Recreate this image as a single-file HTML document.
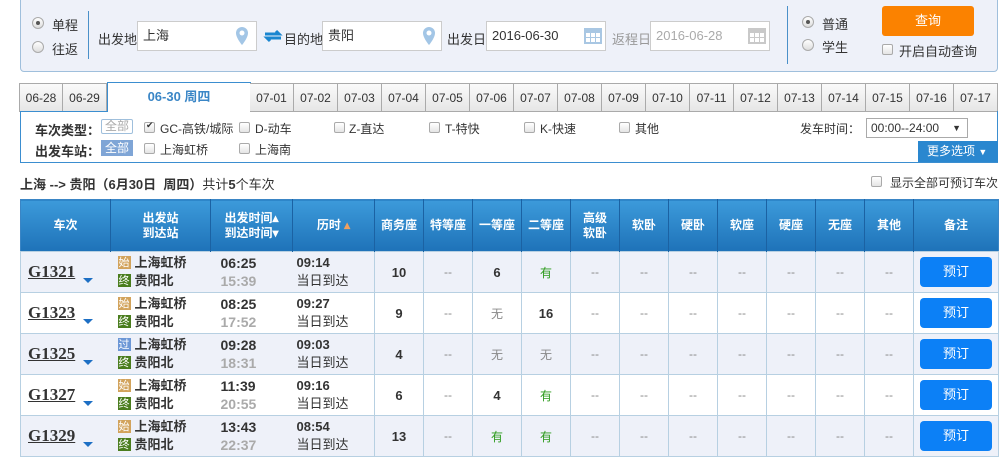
<!DOCTYPE html>
<html><head><meta charset="utf-8"><style>
*{box-sizing:border-box;margin:0;padding:0}
body{width:1004px;height:466px;background:#fff;font-family:"Liberation Sans","Noto Sans CJK SC",sans-serif;font-size:12px;color:#333;position:relative;overflow:hidden}
.a{position:absolute}
.top{left:20px;top:-2px;width:978px;height:74px;background:#eef1f9;border:1px solid #9fbfdc;border-radius:0 0 4px 4px}
.radio{width:12px;height:12px;border:1px solid #aaa;border-radius:50%;background:linear-gradient(#fff,#ddd)}
.radio.on::after{content:"";position:absolute;left:3px;top:3px;width:4px;height:4px;border-radius:50%;background:#555}
.inp{height:30px;background:#fff;border:1px solid #ccc;font-size:13px;line-height:28px;padding-left:5px}
.cb{width:11px;height:11px;border:1px solid #aaa;border-radius:2px;background:linear-gradient(#fff,#e4e4e4)}
.tab{top:83px;height:29px;width:44px;border:1px solid #aaa;border-left:none;background:linear-gradient(#fafafa,#e6e6e6);text-align:center;line-height:28px;font-size:12px;color:#333}
.filt{left:20px;top:111px;width:978px;height:52px;border:1px solid #3b8ed0;border-top:none}
table{position:absolute;left:20px;top:199px;width:978px;border-collapse:collapse;table-layout:fixed;border:1px solid #3a85c5}
th{background:linear-gradient(#3c9ada,#1e72b8);color:#fff;font-weight:bold;font-size:12px;height:52px;line-height:15px;border-right:1px solid #1b62a3;position:relative}
td{height:41px;border:1px solid #b7d0e2;text-align:center;font-size:12px;color:#888}
tr.g td{background:#eef1f9}
.tn{font-family:"Liberation Serif",serif;font-weight:bold;font-size:17px;color:#333;text-decoration:underline;text-align:left;padding-left:7px;border-right:none}
.tn span{display:inline-block;width:0;height:0;border-left:5px solid transparent;border-right:5px solid transparent;border-top:5px solid #1d6fc4;margin-left:8px;vertical-align:-6px}
.st{text-align:left;padding-left:7px;font-weight:bold;font-size:13px;color:#333;line-height:18px;border-left:none;border-right:none;white-space:nowrap}
.ic{display:inline-block;width:13px;height:13px;font-size:11px;line-height:13px;color:#fff;text-align:center;margin-right:4px;vertical-align:-2px;font-weight:normal;overflow:hidden;white-space:nowrap;font-family:"Noto Sans CJK SC",sans-serif}
.tm{text-align:left;padding-left:10px;font-weight:bold;font-size:14px;line-height:18px;color:#333;border-left:none;border-right:none}
.tm i{font-style:normal;color:#aaa}
.du{text-align:left;padding-left:4px;font-size:13px;line-height:18px;color:#333;border-left:none}
.du b{font-weight:bold}
.n{font-weight:bold;color:#333;font-size:13px}
.y{color:#2b9a1a}
.btn{display:inline-block;width:72px;height:30px;background:#0c80f6;border-radius:4px;color:#fff;line-height:30px;font-size:13px}
</style></head><body>
<div class="a top"></div>
<div class="a radio on" style="left:32px;top:17px"></div><div class="a" style="left:52px;top:15px;font-size:13px">单程</div>
<div class="a radio" style="left:32px;top:41px"></div><div class="a" style="left:52px;top:39px;font-size:13px">往返</div>
<div class="a" style="left:88px;top:11px;width:1px;height:48px;background:#4a90c9"></div>
<div class="a" style="left:98px;top:29px;font-size:13px">出发地</div>
<div class="a inp" style="left:137px;top:21px;width:120px">上海</div>
<svg class="a" style="left:235px;top:26px" width="14" height="20"><path d="M7 1a6 6 0 0 0-6 6c0 5 6 12 6 12s6-7 6-12a6 6 0 0 0-6-6z" fill="#a3c6e6"/><circle cx="7" cy="7" r="2.5" fill="#fff"/></svg>
<svg class="a" style="left:263px;top:28px" width="20" height="16"><path d="M2 6h14l-3-3M18 10H4l3 3" stroke="#1a86d0" stroke-width="3" fill="none"/></svg>
<div class="a" style="left:284px;top:29px;font-size:13px">目的地</div>
<div class="a inp" style="left:322px;top:21px;width:120px">贵阳</div>
<svg class="a" style="left:422px;top:26px" width="14" height="20"><path d="M7 1a6 6 0 0 0-6 6c0 5 6 12 6 12s6-7 6-12a6 6 0 0 0-6-6z" fill="#a3c6e6"/><circle cx="7" cy="7" r="2.5" fill="#fff"/></svg>
<div class="a" style="left:447px;top:29px;font-size:13px">出发日</div>
<div class="a inp" style="left:486px;top:21px;width:120px">2016-06-30</div>
<svg class="a" style="left:583px;top:25px" width="20" height="20"><rect x="1" y="3" width="18" height="16" fill="#a9c7e3"/><g fill="#fff"><rect x="3" y="8" width="4" height="4"/><rect x="8" y="8" width="4" height="4"/><rect x="13" y="8" width="4" height="4"/><rect x="3" y="13" width="4" height="4"/><rect x="8" y="13" width="4" height="4"/><rect x="13" y="13" width="4" height="4"/></g></svg>
<div class="a" style="left:612px;top:29px;font-size:13px;color:#999">返程日</div>
<div class="a inp" style="left:650px;top:21px;width:120px;color:#aaa">2016-06-28</div>
<svg class="a" style="left:747px;top:25px" width="20" height="20"><rect x="1" y="3" width="18" height="16" fill="#c9c9c9"/><g fill="#fff"><rect x="3" y="8" width="4" height="4"/><rect x="8" y="8" width="4" height="4"/><rect x="13" y="8" width="4" height="4"/><rect x="3" y="13" width="4" height="4"/><rect x="8" y="13" width="4" height="4"/><rect x="13" y="13" width="4" height="4"/></g></svg>
<div class="a" style="left:787px;top:6px;width:1px;height:58px;background:#4a90c9"></div>
<div class="a radio on" style="left:802px;top:16px"></div><div class="a" style="left:822px;top:14px;font-size:13px">普通</div>
<div class="a radio" style="left:802px;top:39px"></div><div class="a" style="left:822px;top:37px;font-size:13px">学生</div>
<div class="a" style="left:882px;top:6px;width:92px;height:30px;background:#fb8200;border-radius:3px;color:#fff;text-align:center;line-height:30px;font-size:13px">查询</div>
<div class="a cb" style="left:882px;top:44px"></div><div class="a" style="left:899px;top:41px;font-size:13px">开启自动查询</div>

<div class="a tab" style="left:19px;border-left:1px solid #aaa">06-28</div>
<div class="a tab" style="left:63px">06-29</div>
<div class="a" style="left:107px;top:82px;width:144px;height:30px;background:#fff;border:1px solid #3b8ed0;border-bottom:none;text-align:center;line-height:28px;font-weight:bold;color:#3a86c6;font-size:13px">06-30 周四</div>
<div class="a" style="left:251px;top:111px;width:747px;height:1px;background:#3b8ed0"></div>
<div class="a" style="left:20px;top:111px;width:87px;height:1px;background:#3b8ed0"></div>
<div class="a tab" style="left:250px">07-01</div><div class="a tab" style="left:294px">07-02</div><div class="a tab" style="left:338px">07-03</div><div class="a tab" style="left:382px">07-04</div><div class="a tab" style="left:426px">07-05</div><div class="a tab" style="left:470px">07-06</div><div class="a tab" style="left:514px">07-07</div><div class="a tab" style="left:558px">07-08</div><div class="a tab" style="left:602px">07-09</div><div class="a tab" style="left:646px">07-10</div><div class="a tab" style="left:690px">07-11</div><div class="a tab" style="left:734px">07-12</div><div class="a tab" style="left:778px">07-13</div><div class="a tab" style="left:822px">07-14</div><div class="a tab" style="left:866px">07-15</div><div class="a tab" style="left:910px">07-16</div><div class="a tab" style="left:954px">07-17</div>
<div class="a filt"></div>
<div class="a" style="left:35px;top:120px;font-weight:bold;font-size:13px">车次类型：</div>
<div class="a" style="left:101px;top:119px;width:32px;height:15px;border:1px solid #9fbfdc;border-radius:2px;color:#aaa;text-align:center;line-height:13px;font-size:12px">全部</div>
<div class="a cb" style="left:144px;top:122px"></div><div class="a" style="left:146px;top:121px;font-size:9px;line-height:9px">✔</div><div class="a" style="left:160px;top:120px">GC-高铁/城际</div>
<div class="a cb" style="left:239px;top:122px"></div><div class="a" style="left:255px;top:120px">D-动车</div>
<div class="a cb" style="left:334px;top:122px"></div><div class="a" style="left:349px;top:120px">Z-直达</div>
<div class="a cb" style="left:429px;top:122px"></div><div class="a" style="left:445px;top:120px">T-特快</div>
<div class="a cb" style="left:524px;top:122px"></div><div class="a" style="left:540px;top:120px">K-快速</div>
<div class="a cb" style="left:619px;top:122px"></div><div class="a" style="left:635px;top:120px">其他</div>
<div class="a" style="left:800px;top:120px">发车时间：</div>
<div class="a" style="left:866px;top:118px;width:102px;height:20px;border:1px solid #aaa;background:#fff;line-height:18px;padding-left:4px">00:00--24:00<span style="position:absolute;right:6px;font-size:9px">▼</span></div>
<div class="a" style="left:35px;top:141px;font-weight:bold;font-size:13px">出发车站：</div>
<div class="a" style="left:101px;top:140px;width:32px;height:16px;background:#7fa5d6;color:#fff;text-align:center;line-height:16px">全部</div>
<div class="a cb" style="left:144px;top:143px"></div><div class="a" style="left:160px;top:141px">上海虹桥</div>
<div class="a cb" style="left:239px;top:143px"></div><div class="a" style="left:255px;top:141px">上海南</div>
<div class="a" style="left:918px;top:141px;width:80px;height:21px;background:#2a87cf;color:#fff;line-height:21px;padding-left:9px">更多选项 <span style="font-size:9px">▼</span></div>

<div class="a" style="left:20px;top:174px;font-size:13px"><b>上海 --&gt; 贵阳（6月30日&nbsp; 周四）</b>共计<b>5</b>个车次</div>
<div class="a cb" style="left:871px;top:176px"></div><div class="a" style="left:890px;top:174px">显示全部可预订车次</div>

<table>
<colgroup><col style="width:90px"><col style="width:100px"><col style="width:82px"><col style="width:82px"><col style="width:49px"><col style="width:49px"><col style="width:49px"><col style="width:49px"><col style="width:49px"><col style="width:49px"><col style="width:49px"><col style="width:49px"><col style="width:49px"><col style="width:49px"><col style="width:49px"><col style="width:85px"></colgroup>
<tr><th>车次</th><th>出发站<br>到达站</th><th>出发时间▴<br>到达时间▾</th><th>历时 <span style="color:#f0a060">▴</span></th><th>商务座</th><th>特等座</th><th>一等座</th><th>二等座</th><th>高级<br>软卧</th><th>软卧</th><th>硬卧</th><th>软座</th><th>硬座</th><th>无座</th><th>其他</th><th style="border-right:none">备注</th></tr>
<tr class="g"><td class="tn">G1321<span></span></td><td class="st"><span class="ic" style="background:#d2a35c">始</span>上海虹桥<br><span class="ic" style="background:#4a7d1e">终</span>贵阳北</td><td class="tm">06:25<br><i>15:39</i></td><td class="du"><b>09:14</b><br>当日到达</td><td class="n">10</td><td>--</td><td class="n">6</td><td class="y">有</td><td>--</td><td>--</td><td>--</td><td>--</td><td>--</td><td>--</td><td>--</td><td><span class="btn">预订</span></td></tr>
<tr><td class="tn">G1323<span></span></td><td class="st"><span class="ic" style="background:#d2a35c">始</span>上海虹桥<br><span class="ic" style="background:#4a7d1e">终</span>贵阳北</td><td class="tm">08:25<br><i>17:52</i></td><td class="du"><b>09:27</b><br>当日到达</td><td class="n">9</td><td>--</td><td>无</td><td class="n">16</td><td>--</td><td>--</td><td>--</td><td>--</td><td>--</td><td>--</td><td>--</td><td><span class="btn">预订</span></td></tr>
<tr class="g"><td class="tn">G1325<span></span></td><td class="st"><span class="ic" style="background:#6c97d6">过</span>上海虹桥<br><span class="ic" style="background:#4a7d1e">终</span>贵阳北</td><td class="tm">09:28<br><i>18:31</i></td><td class="du"><b>09:03</b><br>当日到达</td><td class="n">4</td><td>--</td><td>无</td><td>无</td><td>--</td><td>--</td><td>--</td><td>--</td><td>--</td><td>--</td><td>--</td><td><span class="btn">预订</span></td></tr>
<tr><td class="tn">G1327<span></span></td><td class="st"><span class="ic" style="background:#d2a35c">始</span>上海虹桥<br><span class="ic" style="background:#4a7d1e">终</span>贵阳北</td><td class="tm">11:39<br><i>20:55</i></td><td class="du"><b>09:16</b><br>当日到达</td><td class="n">6</td><td>--</td><td class="n">4</td><td class="y">有</td><td>--</td><td>--</td><td>--</td><td>--</td><td>--</td><td>--</td><td>--</td><td><span class="btn">预订</span></td></tr>
<tr class="g"><td class="tn">G1329<span></span></td><td class="st"><span class="ic" style="background:#d2a35c">始</span>上海虹桥<br><span class="ic" style="background:#4a7d1e">终</span>贵阳北</td><td class="tm">13:43<br><i>22:37</i></td><td class="du"><b>08:54</b><br>当日到达</td><td class="n">13</td><td>--</td><td class="y">有</td><td class="y">有</td><td>--</td><td>--</td><td>--</td><td>--</td><td>--</td><td>--</td><td>--</td><td><span class="btn">预订</span></td></tr>
</table>
</body></html>
